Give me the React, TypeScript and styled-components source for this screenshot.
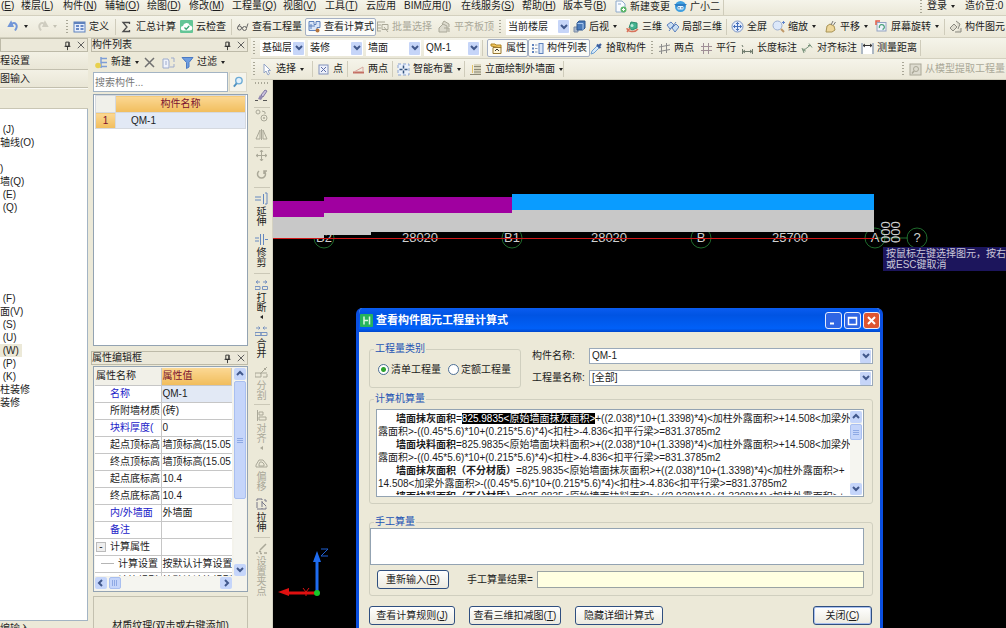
import React from "react";
import styled, { createGlobalStyle, css } from "styled-components";

const Global = createGlobalStyle`
  *, *::before, *::after { box-sizing: border-box; }
  body {
    margin: 0;
    background: #ece9d8;
    color: #1c1c1c;
    font: 10px/12px "Liberation Sans", "Noto Sans CJK SC", sans-serif;
  }
  button, input, select, textarea { font: inherit; color: inherit; margin: 0; }
  ul { list-style: none; margin: 0; padding: 0; }
`;

/* ---------- icons ---------- */

const B = "#5f82bd";
const G = "#aaa898";

const glyphs: Record<string, React.ReactNode> = {
  undo: <path d="M2 6 L4 2.500 L5.500 6 Z M3.500 4.500 C8 1 12 5 8 10.500" fill="none" stroke="#7296d8" strokeWidth="2" />,
  redo: <path d="M11 6 L9 2.500 L7.500 6 Z M9.500 4.500 C5 1 1 5 5 10.500" fill="none" stroke="#cfcdc0" strokeWidth="2" />,
  define: (
    <>
      <rect x="1" y="2" width="11" height="10" fill="#e6eefc" stroke={B} />
      <path d="M1 3h11" stroke={B} strokeWidth="2" />
      <path d="M3 6h3M3 9h3M7.500 6h3M7.500 9h3" stroke="#3f68b4" strokeWidth="1.500" />
    </>
  ),
  sigma: <path d="M9.500 4V2.500H3L7 7L3 11.500H9.500V10" fill="none" stroke="#4a4a4a" strokeWidth="1.300" />,
  cloud: (
    <>
      <rect x="0" y="0" width="13" height="13" rx="1" fill="#63c596" />
      <path d="M3 10.500a2.200 2.200 0 0 1 0-4.400a3.500 3.500 0 0 1 6.800-.6a2.500 2.500 0 0 1 0 5z" fill="#fff" />
      <path d="M4.500 7.500l1.700 1.700l3-3.200" fill="none" stroke="#3aa873" strokeWidth="1.300" />
    </>
  ),
  glasses: (
    <>
      <circle cx="3.500" cy="8" r="2" fill="none" stroke="#666" />
      <circle cx="8.500" cy="8.500" r="2" fill="none" stroke="#666" />
      <path d="M5.500 8l1-1M10.500 8L12 3.500M2 6.500L4 4" fill="none" stroke="#666" />
    </>
  ),
  formula: (
    <>
      <path d="M1 1.500h5v3h2v-3h4v6h-3v3H1z" fill="#dbe7f8" stroke={B} />
      <path d="M3 4v5M1 6h6" stroke={B} />
      <circle cx="9.500" cy="10.500" r="2" fill="#b6753c" />
    </>
  ),
  batch: (
    <>
      <path d="M1 2h8M1 5h4M1 8h4M1 11h4M1.500 2v9" stroke={G} />
      <path d="M6 4.500h6v5H6zM8 7l4 5" fill="none" stroke={G} />
    </>
  ),
  align: <path d="M1 12V8l4-4 4 2v6zM4 4l2-3 5 3v3M6 8h5v4" fill="#dcdacd" stroke={G} />,
  cube: (
    <>
      <path d="M1 7h4v5H1z" fill="#a9b8cc" stroke="#7a8ba4" />
      <path d="M4 3l2-2h6v7l-2 2H4z" fill="#4a7ab8" stroke="#2c5690" />
      <path d="M4.500 3.500H10V10" fill="none" stroke="#a9c7ee" />
    </>
  ),
  orbit: (
    <>
      <path d="M5 2l6 1v5l-5 2-3-2z" fill="#44b38f" stroke="#2d8b6d" />
      <path d="M1 8c0 4 8 5 11 1M1 12l3-4" fill="none" stroke="#d8735b" strokeWidth="1.400" />
      <circle cx="6" cy="5.500" r="1.500" fill="#bdeedd" />
    </>
  ),
  part3d: (
    <>
      <path d="M1 5l4-3 3 3-4 4zM6 8l4-4 3 3-4 5z" fill="#c8def2" stroke={B} />
      <path d="M3 11l7-9" stroke={B} />
    </>
  ),
  full: (
    <>
      <circle cx="6.500" cy="6.500" r="5.500" fill="#e3ecfb" stroke="#7e96c4" />
      <path d="M6.500 2.500v8M2.500 6.500h8M5 4l1.500-1.500L8 4M5 9l1.500 1.500L8 9M4 5L2.500 6.500L4 8M9 5l1.500 1.500L9 8" fill="none" stroke="#456fba" />
    </>
  ),
  zoom: (
    <>
      <circle cx="5.500" cy="5.500" r="4.500" fill="#dce8fa" stroke="#9caed0" />
      <path d="M9 9l3 3" stroke="#c09968" strokeWidth="2" />
      <path d="M10 2.500h3M11.500 1v3" stroke="#5d82cc" />
    </>
  ),
  pan: (
    <>
      <path d="M2 12L3 6l3-2 4 2 1 4-3 2z" fill="#eed79b" stroke="#a89355" />
      <path d="M7 5L9 1M9.500 5l2-3" stroke="#777" />
    </>
  ),
  rotate: (
    <>
      <rect x="2" y="2.500" width="9" height="8.500" fill="#eef3fb" stroke="#93a3c2" />
      <path d="M1 5V1h4" fill="none" stroke="#e15c4a" strokeWidth="1.500" />
      <path d="M4.500 8a2.500 2.500 0 1 1 3 1.500" fill="none" stroke="#4da37c" strokeWidth="1.300" />
    </>
  ),
  element: <path d="M1 8l4-4 3 3-4 4zM7 1l4 3-2 5M6 12h6V8" fill="#dedccf" stroke="#8b8a80" />,
  property: (
    <>
      <path d="M1 4V2h4l1 1h5v3z" fill="#f1c65c" stroke="#b08626" />
      <path d="M3 5.500h8v6H3z" fill="#fff6d9" stroke="#9a7a33" />
      <path d="M5 9l2-2 2 2" fill="none" stroke="#333" />
    </>
  ),
  list: (
    <>
      <path d="M1 3h2M1 6.500h2M1 10h2" stroke={B} strokeWidth="2" />
      <path d="M4 3h2.500M4 6.500h2.500M4 10h2.500" stroke="#8c9cb8" />
      <rect x="8" y="1.500" width="4" height="10" fill="#dbe7f8" stroke={B} />
    </>
  ),
  picker: (
    <>
      <path d="M1 12l1-3 5-5 2 2-5 5z" fill="#d5e9fb" stroke="#6fa0d0" />
      <path d="M7 2.500L10.500 6M8.500 4.500L11 2" stroke="#3c5f9e" strokeWidth="2.200" />
    </>
  ),
  twoAxis: <path d="M3.500 2v10M8.500 1v10M1 9.500L12 7.500M1 5L12 3" fill="none" stroke="#8c8c8c" />,
  parallel: <path d="M3.500 1v11M8.500 1v11M1 4.500h11M1 8.500h11" fill="none" stroke="#a08f96" />,
  length: <path d="M1.500 7v5M11.500 7v5M2 9.500h9M4 8L2 9.500 4 11M9 8l2 1.500L9 11M1 3l1 2" fill="none" stroke="#6f7a6c" />,
  alignDim: <path d="M1 6l2 5M8 1.500l3 4M2.500 8.500L9 3.500M3 6.500l-.5 2 2.300.5M7 3.500h2" fill="none" stroke="#77927a" />,
  measure: (
    <>
      <rect x="2" y="4" width="9" height="8" fill="#fff" />
      <path d="M1 1v11M12 1v11" stroke="#6d83a8" />
      <path d="M2 3.500h9M4 2L2 3.500 4 5M9 2l2 1.500L9 5" stroke="#333" fill="none" />
    </>
  ),
  cursor: <path d="M4 1v9l2-2 2 4 1.500-1L8 7.500h2.500z" fill="#fff" stroke="#93a4c6" />,
  point: (
    <>
      <rect x="2" y="2" width="9" height="9" fill="#eef1fb" stroke="#8292bb" />
      <path d="M4 4l5 5M9 4L4 9" stroke="#5e6ea6" />
    </>
  ),
  line: (
    <>
      <path d="M1 9.500h11" stroke="#c46f62" strokeWidth="2" />
      <path d="M2 9L11 4v5" fill="none" stroke="#d9a79f" />
    </>
  ),
  smart: (
    <>
      <rect x="1" y="1" width="11" height="11" fill="#eaf1fc" stroke="#8ba3cf" strokeDasharray="3 2" />
      <path d="M6.500 2.500v8M2.500 6.500h8" stroke="#35557e" strokeWidth="1.500" strokeDasharray="3 2" />
    </>
  ),
  facade: (
    <>
      <path d="M5 1h7v11H5z" fill="#d8d4bd" />
      <path d="M1 11.500h11M5 3.500h7M5 6.500h7M5 9h7" stroke="#8f8c78" />
      <path d="M3.500 2v8" stroke="#e5c36a" />
    </>
  ),
  extract: (
    <>
      <rect x="1" y="1" width="11" height="11" fill="#dddbcf" stroke={G} />
      <circle cx="7" cy="6" r="2.500" fill="none" stroke={G} />
      <path d="M5 8l-2 2.500" stroke={G} strokeWidth="1.500" />
    </>
  ),
  docPlus: (
    <>
      <path d="M2 1h6l3 3v8H2z" fill="#f8fbff" stroke="#8eaacb" />
      <path d="M4 4h3" stroke="#8eaacb" />
      <circle cx="9.500" cy="9.500" r="3" fill="#5cb56a" />
      <path d="M8 9.500h3M9.500 8v3" stroke="#fff" />
    </>
  ),
  mascot: (
    <>
      <circle cx="6.500" cy="6.500" r="5.500" fill="#3f9fe0" />
      <path d="M0 4h13L10 7H3z" fill="#2b7dc4" />
      <rect x="3.500" y="6" width="6" height="3.500" rx="1" fill="#eaf6ff" />
      <path d="M5 7v1.500M8 7v1.500" stroke="#24588c" />
    </>
  ),
  newItem: (
    <>
      <path d="M6 1v11M6 2.500h6M6 6.500h6M6 10.500h6" stroke="#7d9ed6" strokeWidth="1.500" />
      <circle cx="3" cy="9.500" r="2.800" fill="#e8d14e" />
    </>
  ),
  remove: <path d="M2 2l9 9M11 2l-9 9" stroke="#707070" strokeWidth="1.500" />,
  copy: (
    <>
      <path d="M1 3h5l1 2v7H1z" fill="#eef2fb" stroke="#9dabcc" />
      <path d="M3 6h2M3 8h2M9 2h3v4M12 8v3H8" fill="none" stroke="#9dabcc" />
    </>
  ),
  filter: <path d="M1 1.500h11L8 6.500V11L5.500 12.500V6.500z" fill="#6f9ee0" stroke="#4b7ac4" />,
  search: (
    <>
      <circle cx="7.500" cy="5" r="3.500" fill="#e2f1fb" stroke="#6cabd6" strokeWidth="1.500" />
      <path d="M5 8l-3 3.500" stroke="#4d90c0" strokeWidth="2" />
    </>
  ),
  pin: <path d="M4.500 2.500h4v5h-4zM3 7.500h7M6.500 8v4M8 3v4" fill="none" stroke="#222" />,
  close: <path d="M3 3l7 7M10 3l-7 7" stroke="#555" />,
  brush: (
    <>
      <path d="M6 6l4-5 2 1-4 6z" fill="#c9c0dd" stroke="#8079a3" />
      <path d="M3 10l2-4 3 2-2 3z" fill="#9188b0" />
      <path d="M0 11.500h3M8 11.500h4" stroke="#555" />
    </>
  ),
  duplicate: (
    <g fill="none" stroke={G}>
      <circle cx="3" cy="3" r="2" />
      <circle cx="9" cy="9" r="3" />
      <path d="M7 2l3 1v2M8 9h2M9 8v2" />
    </g>
  ),
  mirror: <path d="M5 2v9H1zM8 2v9h4zM6.500 1v11" fill="none" stroke={G} />,
  move: <path d="M6.500 1v11M1 6.500h11M5 3l1.500-2L8 3M5 10l1.500 2L8 10M3 5L1 6.500 3 8M10 5l2 1.500L10 8" fill="none" stroke={G} />,
  turn: <path d="M4 3a4 4 0 1 0 5 0M9 6V3h3" fill="none" stroke={G} strokeWidth="1.500" />,
  extend: <path d="M0 5h6M0 8h6M8.500 2v10M10 1h2v11h-2" fill="none" stroke="#6488c0" />,
  trim: <path d="M0 5h4M0 8h4M5.500 1v11M8.500 1v11M10 6.500h3" fill="none" stroke="#6488c0" />,
  split: <path d="M0 8.500h5v3H0zM7.500 8.500h5v3h-5zM1 4h4M3 2.500L1 4l2 1.500M8 4h4M10 2.500L12 4l-2 1.500" fill="none" stroke="#7893c0" />,
  join: <path d="M0 8.500h6v3H0zM6 8.500h6v3H6zM1 4h4M3.500 2.500L5 4 3.500 5.500M8 4h4M9.500 2.500L8 4l1.500 1.500" fill="none" stroke="#7893c0" />,
  cut: <path d="M0 7h6v4H0zM6 7h6M5 8l7-7M9 2l2 2M8 11h4V8" fill="none" stroke={G} />,
  alignV: <path d="M2.500 1v11M4 3h4v3H4zM4 8h7v3H4z" fill="none" stroke={G} />,
  offset: <path d="M1 10V8l3-5h4l4 5v2zM4 9V7l1-2h2l2 2v2z" fill="none" stroke={G} />,
  stretch: <path d="M2 1h5v10H2zM7 4l4 4v3H7M9 2l2 0v2" fill="none" stroke="#778" strokeDasharray="6 1" />,
  grip: <path d="M5 8l6-6M4 9l2 1M1 11h2M5 11.500h2M9 11h3" fill="none" stroke={G} strokeWidth="1.500" />,
};

const Svg = styled.svg`
  flex: none;
  display: block;
`;
const Icon = ({ name, size = 13 }: { name: string; size?: number }) => (
  <Svg width={size} height={size} viewBox="0 0 13 13" aria-hidden="true">
    {glyphs[name]}
  </Svg>
);

const Chevron = ({ dir = "down" }: { dir?: "down" | "up" | "left" | "right" }) => {
  const d = { down: "M2 3l3 3 3-3", up: "M2 6l3-3 3 3", left: "M6 2L3 5l3 3", right: "M4 2l3 3-3 3" }[dir];
  return (
    <Svg width="10" height="10" viewBox="0 0 10 10" aria-hidden="true">
      <path d={d} fill="none" stroke="#41588c" strokeWidth="2" />
    </Svg>
  );
};

/* ---------- shared bars ---------- */

const Page = styled.div`
  height: 100vh;
  display: flex;
  flex-direction: column;
  overflow: hidden;
  white-space: nowrap;
`;

const Row = styled.div<{ $h: number }>`
  flex: none;
  display: flex;
  align-items: center;
  height: ${(p) => p.$h}px;
  overflow: hidden;
  background: linear-gradient(#f5f4ea, #ebe8d8);
  border-bottom: 1px solid #d3d0bf;
`;

const MenuBar = styled(Row)`
  align-items: flex-start;
`;

const Item = styled.button<{ $w: number; $muted?: boolean }>`
  flex: none;
  display: flex;
  align-items: center;
  gap: 3px;
  width: ${(p) => p.$w}px;
  padding: 0;
  border: 0;
  background: none;
  line-height: 12px;
  text-align: left;
  white-space: nowrap;
  color: ${(p) => (p.$muted ? "#aaa898" : "#1c1c1c")};
`;

const Pressed = styled(Item)`
  height: 18px;
  padding: 0 2px;
  border: 1px solid #a5b0c4;
  border-radius: 2px;
  background: #fbfbf8;
`;

const Spacer = styled.span<{ $w?: number }>`
  flex: ${(p) => (p.$w ? "none" : "1")};
  width: ${(p) => p.$w ?? 0}px;
`;

const Divider = styled.span`
  flex: none;
  width: 1px;
  height: 16px;
  margin: 0 4px 0 0;
  background: #cfccbb;
`;

const Grip = styled.span`
  flex: none;
  width: 2px;
  height: 14px;
  margin-right: 5px;
  background: repeating-linear-gradient(#a9a797 0 1px, transparent 1px 3px);
`;

const Caret = styled.span<{ $muted?: boolean }>`
  flex: none;
  width: 0;
  height: 0;
  margin-left: 1px;
  border: 2px solid transparent;
  border-top: 3px solid ${(p) => (p.$muted ? "#c4c2b4" : "#222")};
  border-bottom: 0;
`;

const ComboBox = styled.span<{ $w?: number; $framed?: boolean }>`
  flex: ${(p) => (p.$w ? "none" : "1")};
  width: ${(p) => (p.$w ? p.$w + "px" : "auto")};
  height: 16px;
  display: flex;
  align-items: center;
  background: #fff;
  padding-right: 1px;
  border: ${(p) => (p.$framed ? "1px solid #9aa9b9" : "0")};
  select {
    flex: 1;
    min-width: 0;
    height: 14px;
    padding: 0 2px;
    border: 0;
    background: none;
    appearance: none;
    line-height: 14px;
  }
`;
const ArrowFace = styled.span`
  flex: none;
  display: grid;
  place-items: center;
  width: 11px;
  height: 13px;
  background: #c6d5f8;
  border-radius: 1px;
  pointer-events: none;
`;
const Combo = ({ id, label, value, w, framed }: { id?: string; label?: string; value: string; w?: number; framed?: boolean }) => (
  <ComboBox $w={w} $framed={framed}>
    <select id={id} aria-label={label} defaultValue={value}>
      <option>{value}</option>
    </select>
    <ArrowFace>
      <Chevron />
    </ArrowFace>
  </ComboBox>
);

type Tool = { t?: string; i?: string; w: number; caret?: boolean; muted?: boolean; on?: boolean; name?: string };
const Tools = ({ items }: { items: (Tool | "|" | "grip")[] }) => (
  <>
    {items.map((it, k) => {
      if (it === "|") return <Divider key={k} />;
      if (it === "grip") return <Grip key={k} />;
      const Part = it.on ? Pressed : Item;
      return (
        <Part key={k} type="button" $w={it.w} $muted={it.muted} aria-label={it.name}>
          {it.i && <Icon name={it.i} />}
          {it.t}
          {it.caret && <Caret $muted={it.muted} />}
        </Part>
      );
    })}
  </>
);

const Key = ({ text }: { text: string }) => {
  const m = text.match(/^(.*)\((\w)\)$/);
  return m ? (
    <span>
      {m[1]}(<u>{m[2]}</u>)
    </span>
  ) : (
    <span>{text}</span>
  );
};

const menus: [string, number][] = [
  ["(E)", 20], ["楼层(L)", 42], ["构件(N)", 42], ["辅轴(O)", 42], ["绘图(D)", 42], ["修改(M)", 43],
  ["工程量(Q)", 51], ["视图(V)", 42], ["工具(T)", 41], ["云应用", 38], ["BIM应用(I)", 57],
  ["在线服务(S)", 61], ["帮助(H)", 41], ["版本号(B)", 51],
];

/* ---------- docked panels ---------- */

const Workspace = styled.div`
  flex: 1;
  min-height: 0;
  display: flex;
  gap: 3px;
`;

const Dock = styled.section<{ $w: number }>`
  flex: none;
  width: ${(p) => p.$w}px;
  display: flex;
  flex-direction: column;
  min-height: 0;
`;

const PanelTitle = styled.header`
  flex: none;
  display: flex;
  align-items: center;
  gap: 2px;
  height: 14px;
  border: 1px solid #bdbaa8;
  background: #ebe8d9;
  font-size: 10px;
  h2 { flex: 1; margin: 0; font: inherit; }
`;
const TitleButton = styled.button`
  display: grid;
  place-items: center;
  width: 12px;
  height: 12px;
  padding: 0;
  border: 0;
  background: none;
`;
const Title = ({ text }: { text: string }) => (
  <PanelTitle>
    <h2>{text}</h2>
    <TitleButton aria-label="固定"><Icon name="pin" size={11} /></TitleButton>
    <TitleButton aria-label="关闭面板"><Icon name="close" size={12} /></TitleButton>
  </PanelTitle>
);

const NavButton = styled.button`
  flex: none;
  height: 18px;
  padding: 0;
  border: 0;
  border-bottom: 1px solid #c2bfae;
  background: linear-gradient(#f3f1e5, #e9e6d6);
  text-align: left;
`;
const NavHead = styled.div`
  flex: none;
  height: 21px;
  border-top: 1px solid #faf9f2;
  border-bottom: 1px solid #c9c6b4;
`;
const Tree = styled.ul`
  && { padding-top: 14px; }
  flex: 1;
  overflow: hidden;
  background: #fff;
  border: solid #a3b4c4;
  border-width: 0 1px 1px 0;
`;
const TreeRow = styled.li<{ $on?: boolean }>`
  width: max-content;
  height: 13px;
  line-height: 13px;
  padding: 0 3px 0 0;
  background: ${(p) => (p.$on ? "#ece9d8" : "none")};
`;
const Below = styled.div`
  flex: none;
  height: 7px;
  padding-top: 2px;
  overflow: hidden;
`;

const treeRows = [" (J)", "轴线(O)", "", ")", "墙(Q)", " (E)", " (Q)", "", "", "", "", "", "", " (F)", "面(V)", " (S)", " (U)", " (W)", " (P)", " (K)", "柱装修", "装修"];
const TreeText = styled.span`
  white-space: pre;
`;

const PanelTools = styled.div`
  flex: none;
  display: flex;
  align-items: center;
  height: 20px;
  padding-left: 4px;
`;
const SearchRow = styled.div`
  flex: none;
  display: flex;
  gap: 1px;
  height: 21px;
  padding: 0 1px 0 2px;
  input {
    flex: 1;
    min-width: 0;
    height: 20px;
    padding: 0 1px;
    border: 1px solid #a3b4c4;
    background: #fff;
  }
  input::placeholder { color: #777; }
  button {
    width: 18px;
    height: 20px;
    padding: 2px;
    border: 1px solid #dcd9ca;
    background: #f5f4ec;
  }
`;
const ListBox = styled.div`
  flex: 1;
  margin: 1px 0 5px 2px;
  padding: 0 1px;
  background: #fff;
  border: 1px solid #93a3b2;
  overflow: hidden;
`;
const orange = css`
  background: linear-gradient(#fbd894, #f1bd5c);
  color: #7a1230;
`;
const ListTable = styled.table`
  width: 100%;
  border-collapse: collapse;
  table-layout: fixed;
  col:first-child { width: 20px; }
  th, td { padding: 0; height: 16px; font-weight: 400; border: 1px solid #d5d9df; }
  thead th { height: 17px; }
  thead th:last-child, tbody th { ${orange} }
  thead th:first-child { background: #f0f0ea; }
  td { background: #e2e9f5; padding-left: 15px; }
`;

const PropBox = styled.div`
  flex: none;
  height: 226px;
  margin: 1px 0 3px 2px;
  padding: 1px;
  display: grid;
  grid-template-columns: 1fr 12px;
  grid-template-rows: 1fr 13px;
  gap: 1px 2px;
  border: 1px solid #93a3b2;
  background: #f4f3ec;
`;
const PropClip = styled.div`
  overflow: hidden;
  background: #fff;
`;
const PropTable = styled.table`
  width: 100%;
  border-collapse: collapse;
  table-layout: fixed;
  col:first-child { width: 66px; }
  th, td {
    height: 17px;
    padding: 0 0 0 1px;
    overflow: hidden;
    text-align: left;
    font-weight: 400;
    line-height: 12px;
    border: 1px solid #c6c6c6;
    border-width: 0 1px 1px 0;
  }
  td { border-right: 0; }
  thead th { background: #f1f0e8; height: 17px; }
  thead th:last-child { ${orange} }
`;
const PropName = styled.th<{ $blue?: boolean; $indent: number }>`
  && { padding-left: ${(p) => p.$indent}px; }
  color: ${(p) => (p.$blue ? "#2222c8" : "inherit")};
`;
const PropValue = styled.td<{ $on?: boolean }>`
  background: ${(p) => (p.$on ? "#e2e9f5" : "#fff")};
`;
const Toggle = styled.button`
  display: inline-grid;
  place-items: center;
  width: 10px;
  height: 10px;
  margin-right: 4px;
  padding: 0;
  border: 1px solid #bbb;
  background: #eee;
  line-height: 8px;
  vertical-align: middle;
`;
const Branch = styled.span`
  display: inline-block;
  width: 13px;
  height: 1px;
  margin-right: 4px;
  background: #b5b5b5;
  vertical-align: middle;
`;

const props: [string, string, boolean, number][] = [
  ["名称", "QM-1", true, 15], ["所附墙材质", "(砖)", false, 15], ["块料厚度(", "0", true, 15],
  ["起点顶标高", "墙顶标高(15.05", false, 15], ["终点顶标高", "墙顶标高(15.05", false, 15],
  ["起点底标高", "10.4", false, 15], ["终点底标高", "10.4", false, 15], ["内/外墙面", "外墙面", true, 15],
  ["备注", "", true, 15], ["计算属性", "", false, 1], ["计算设置", "按默认计算设置", false, 6],
  ["计算规则", "按默认计算规则", false, 6],
];

const Bar = styled.div<{ $row?: boolean }>`
  display: flex;
  flex-direction: ${(p) => (p.$row ? "row" : "column")};
  justify-content: space-between;
  background: #f5f5f0;
`;
const BarButton = styled.button`
  flex: none;
  display: grid;
  place-items: center;
  width: 12px;
  height: 12px;
  padding: 0;
  border: 0;
  border-radius: 2px;
  background: #c5d5fa;
`;
const Thumb = styled.span<{ $w: number; $h: number; $row?: boolean }>`
  flex: none;
  display: grid;
  place-items: center;
  width: ${(p) => p.$w}px;
  height: ${(p) => p.$h}px;
  margin: ${(p) => (p.$row ? "0 auto 0 2px" : "1px 0 auto")};
  border: 1px solid #a9bff0;
  border-radius: 2px;
  background: #c5d5fa;
  &::after {
    content: "";
    width: 6px;
    height: 6px;
    background: repeating-linear-gradient(${(p) => (p.$row ? "90deg" : "0deg")}, #8ea9e4 0 1px, transparent 1px 2px);
  }
`;

const Texture = styled.div`
  flex: none;
  height: 32px;
  margin: 1px 0 0 2px;
  padding-top: 23px;
  border: 1px solid #c3c0af;
  border-bottom: 0;
  overflow: hidden;
  text-align: center;
`;

/* ---------- drawing area ---------- */

const Right = styled.div`
  flex: 1;
  min-width: 0;
  display: flex;
  flex-direction: column;
`;
const Stage = styled.div`
  flex: 1;
  min-height: 0;
  display: flex;
`;
const SideBar = styled.nav`
  flex: none;
  width: 22px;
  display: flex;
  flex-direction: column;
  align-items: center;
  padding-top: 2px;
  border-right: 1px solid #d5d2c2;
  overflow: hidden;
`;
const SideGrip = styled.span`
  width: 14px;
  height: 2px;
  margin-bottom: 4px;
  background: repeating-linear-gradient(90deg, #a9a797 0 1px, transparent 1px 3px);
`;
const SideItem = styled.button<{ $h: number; $muted?: boolean; $line?: boolean; $labelled?: boolean }>`
  flex: none;
  width: 16px;
  height: ${(p) => p.$h}px;
  display: flex;
  flex-direction: column;
  align-items: center;
  padding: ${(p) => (p.$labelled ? 4 : 1)}px 0 0;
  border: 0;
  border-bottom: 1px solid ${(p) => (p.$line ? "#cbc8b7" : "transparent")};
  background: none;
  color: ${(p) => (p.$muted ? "#aaa898" : "#1c1c1c")};
  span {
    width: 10px;
    margin-top: 2px;
    line-height: 10px;
    white-space: normal;
    word-break: break-all;
  }
`;
const SideCaret = styled.i<{ $muted?: boolean }>`
  margin-top: 2px;
  border: 2px solid transparent;
  border-right: 3px solid ${(p) => (p.$muted ? "#aaa898" : "#222")};
  border-left: 0;
`;

const sideTools: { i: string; t?: string; h: number; muted?: boolean; line?: boolean; caret?: boolean }[] = [
  { i: "brush", h: 20, line: true },
  { i: "duplicate", h: 19, muted: true },
  { i: "mirror", h: 21, muted: true, line: true },
  { i: "move", h: 19, muted: true },
  { i: "turn", h: 21, muted: true, line: true },
  { i: "extend", t: "延伸", h: 41 },
  { i: "trim", t: "修剪", h: 45, line: true },
  { i: "split", t: "打断", h: 46, caret: true },
  { i: "join", t: "合并", h: 42 },
  { i: "cut", t: "分割", h: 43, muted: true, line: true },
  { i: "alignV", t: "对齐", h: 48, muted: true, caret: true },
  { i: "offset", t: "偏移", h: 41, muted: true },
  { i: "stretch", t: "拉伸", h: 44, line: true },
  { i: "grip", t: "设置夹点", h: 62, muted: true },
];

const Canvas = styled.main`
  flex: 1;
  min-width: 0;
  position: relative;
  overflow: hidden;
  background: #000;
`;
const Drawing = styled.svg`
  display: block;
  width: 100%;
  height: 100%;
  font: 13px "Liberation Sans", sans-serif;
`;
const Hint = styled.div`
  position: absolute;
  left: 610px;
  top: 167px;
  right: 0;
  height: 24px;
  padding: 1px 3px;
  overflow: hidden;
  background: #1c155c;
  color: #c9c6d8;
  line-height: 11px;
`;

/* ---------- dialog ---------- */

const Dialog = styled.section`
  position: absolute;
  left: 83px;
  top: 228px;
  width: 527px;
  border: solid #0a4fe0;
  border-width: 0 3px 3px;
  border-radius: 6px 6px 0 0;
  background: #ece9d8;
  overflow: hidden;
`;
const DialogTitle = styled.header`
  display: flex;
  align-items: center;
  gap: 2px;
  height: 24px;
  padding: 0 0 0 1px;
  background: linear-gradient(#0a5cf0, #0054e3 30%, #0060f8 85%, #0047cc);
  color: #fff;
  h1 { flex: 1; margin: 0 0 0 1px; font-size: 11px; line-height: 14px; font-weight: 700; }
`;
const Cap = styled.button<{ $red?: boolean }>`
  display: grid;
  place-items: center;
  width: 17px;
  height: 17px;
  padding: 0;
  border: 1px solid #e6edfb;
  border-radius: 3px;
  background: ${(p) => (p.$red ? "#dd5530" : "#2f66e4")};
`;
const DialogBody = styled.div`
  display: flex;
  flex-direction: column;
  padding: 11px 7px 12px 10px;
`;
const TopRow = styled.div`
  display: grid;
  grid-template-columns: 152px 1fr;
  gap: 11px;
  margin-bottom: 5px;
`;
const Group = styled.fieldset`
  min-width: 0;
  margin: 0;
  padding: 0 8px 6px 6px;
  border: 1px solid #d0cfbf;
  border-radius: 3px;
  legend { margin-left: -2px; padding: 0 1px; color: #2454b4; line-height: 12px; }
`;
const Radios = styled.div`
  display: flex;
  align-items: center;
  gap: 7px;
  height: 24px;
  padding: 5px 0 0 2px;
  margin-bottom: 2px;
  label { display: flex; align-items: center; gap: 2px; }
  input {
    appearance: none;
    width: 11px;
    height: 11px;
    border: 1px solid #4c6f96;
    border-radius: 50%;
    background: #fff;
  }
  input:checked { background: radial-gradient(circle, #2fa32f 0 2px, #fff 3px); }
`;
const Fields = styled.div`
  display: grid;
  grid-template-columns: 57px 1fr;
  grid-auto-rows: 16px;
  row-gap: 6px;
  align-content: start;
  align-items: center;
  padding-top: 5px;
`;
const Formula = styled.div`
  display: grid;
  grid-template-columns: 1fr 12px;
  height: 88px;
  margin-top: 4px;
  padding: 1px;
  border: 1px solid #93a3b2;
  background: #fff;
`;
const Lines = styled.div`
  overflow: hidden;
  padding: 1px 0 0;
  line-height: 13px;
  p { margin: 0; white-space: pre; }
  p.start { padding-left: 18px; }
  mark { background: #000; color: #fff; }
`;
const Manual = styled(Group)`
  margin-top: 12px;
  padding-left: 0;
  legend { margin-left: 4px; }
  textarea {
    display: block;
    width: 100%;
    height: 37px;
    border: 1px solid #93a3b2;
    background: #fff;
    resize: none;
  }
`;
const ManualRow = styled.div`
  display: flex;
  align-items: center;
  margin-top: 5px;
  padding-left: 7px;
  label { margin-left: 18px; width: 70px; }
  input {
    flex: 1;
    height: 17px;
    border: 1px solid #9aa3a3;
    background: #ffffe1;
  }
`;
const Push = styled.button<{ $w: number; $main?: boolean }>`
  width: ${(p) => p.$w}px;
  height: 19px;
  padding: 0;
  border: 1px solid #2f4f80;
  border-radius: 3px;
  background: linear-gradient(#fff, #eceae0);
  box-shadow: ${(p) => (p.$main ? "inset 0 0 0 1px #a9c0ee" : "none")};
  white-space: nowrap;
`;
const Actions = styled.footer`
  display: flex;
  gap: 14px;
  margin-top: 10px;
  padding-right: 1px;
  button:last-child { margin-left: auto; }
`;

const bubbles: [number, string][] = [[51, "B2"], [239, "B1"], [428, "B"], [602, "A"], [644, "?"]];

const tail = "+((2.038)*10+(1.3398)*4)<加柱外露面积>+14.508<加梁外";
const rest = "露面积>-((0.45*5.6)*10+(0.215*5.6)*4)<扣柱>-4.836<扣平行梁>=831.3785m2";

export default function App() {
  return (
    <>
      <Global />
      <Page>
        <MenuBar as="nav" $h={16}>
          <Spacer $w={1} />
          {menus.map(([t, w]) => (
            <Item key={t} type="button" $w={w}>
              <Key text={t} />
            </Item>
          ))}
          <Tools items={[{ i: "docPlus", t: "新建变更", w: 60 }, { i: "mascot", t: "广小二", w: 49 }]} />
          <Divider />
          <Spacer />
          <Grip />
          <Tools items={[{ t: "登录", w: 38, caret: true }, { t: "造价豆:0", w: 41 }]} />
        </MenuBar>

        <Row $h={22}>
          <Spacer $w={7} />
          <Tools
            items={[
              { i: "undo", w: 29, caret: true, name: "撤销" }, { i: "redo", w: 30, caret: true, muted: true, name: "恢复" },
              "grip", { i: "define", t: "定义", w: 42 },
              "|", { i: "sigma", t: "汇总计算", w: 60 }, { i: "cloud", t: "云检查", w: 51 },
              "|", { i: "glasses", t: "查看工程量", w: 69 }, { i: "formula", t: "查看计算式", w: 71, on: true },
              { i: "batch", t: "批量选择", w: 62, muted: true }, { i: "align", t: "平齐板顶", w: 61, muted: true },
              "grip",
            ]}
          />
          <Combo label="楼层范围" value="当前楼层" w={64} />
          <Spacer $w={3} />
          <Tools
            items={[
              { i: "cube", t: "后视", w: 53, caret: true }, { i: "orbit", t: "三维", w: 40 }, { i: "part3d", t: "局部三维", w: 60 },
              "|", { i: "full", t: "全屏", w: 41 }, { i: "zoom", t: "缩放", w: 52, caret: true }, { i: "pan", t: "平移", w: 51, caret: true },
              { i: "rotate", t: "屏幕旋转", w: 69, caret: true }, "|", { i: "element", t: "构件图元", w: 60 },
            ]}
          />
        </Row>

        <Workspace>
          <Dock $w={88}>
            <Title text="" />
            <NavButton>程设置</NavButton>
            <NavButton>图输入</NavButton>
            <NavHead />
            <Tree>
              {treeRows.map((t, k) => (
                <TreeRow key={k} $on={t.includes("W")}>
                  <TreeText>{t}</TreeText>
                </TreeRow>
              ))}
            </Tree>
            <Below>编输入</Below>
          </Dock>

          <Dock $w={157}>
            <Title text="构件列表" />
            <PanelTools>
              <Tools
                items={[
                  { i: "newItem", t: "新建", w: 48, caret: true }, { i: "remove", w: 19, name: "删除" },
                  { i: "copy", w: 19, name: "复制" }, { i: "filter", t: "过滤", w: 44, caret: true },
                ]}
              />
            </PanelTools>
            <SearchRow>
              <input aria-label="搜索构件" placeholder="搜索构件..." />
              <button aria-label="搜索"><Icon name="search" size={12} /></button>
            </SearchRow>
            <ListBox>
              <ListTable>
                <colgroup><col /><col /></colgroup>
                <thead><tr><th /><th>构件名称</th></tr></thead>
                <tbody><tr><th>1</th><td>QM-1</td></tr></tbody>
              </ListTable>
            </ListBox>
            <Title text="属性编辑框" />
            <PropBox>
              <PropClip>
                <PropTable>
                  <colgroup><col /><col /></colgroup>
                  <thead><tr><th>属性名称</th><th>属性值</th></tr></thead>
                  <tbody>
                    {props.map(([n, v, blue, indent]) => (
                      <tr key={n}>
                        <PropName $blue={blue} $indent={indent}>
                          {indent === 1 && <Toggle aria-label="折叠">-</Toggle>}
                          {indent === 6 && <Branch />}
                          {n}
                        </PropName>
                        <PropValue $on={n === "名称"}>{v}</PropValue>
                      </tr>
                    ))}
                  </tbody>
                </PropTable>
              </PropClip>
              <Bar>
                <BarButton aria-label="向上"><Chevron dir="up" /></BarButton>
                <Thumb $w={12} $h={118} />
                <BarButton aria-label="向下"><Chevron /></BarButton>
              </Bar>
              <Bar $row>
                <BarButton aria-label="向左"><Chevron dir="left" /></BarButton>
                <Thumb $w={12} $h={12} $row />
                <BarButton aria-label="向右"><Chevron dir="right" /></BarButton>
              </Bar>
            </PropBox>
            <Texture>材质纹理(双击或右键添加)</Texture>
          </Dock>

          <Right>
            <Row $h={21}>
              <Spacer $w={2} />
              <Grip />
              <Combo label="楼层" value="基础层" w={45} />
              <Spacer $w={3} />
              <Combo label="类别" value="装修" w={55} />
              <Spacer $w={3} />
              <Combo label="构件类型" value="墙面" w={55} />
              <Spacer $w={3} />
              <Combo label="构件" value="QM-1" w={56} />
              <Spacer $w={2} />
              <Divider />
              <Tools
                items={[
                  { i: "property", t: "属性", w: 41, on: true }, { i: "list", t: "构件列表", w: 62, on: true },
                  { i: "picker", t: "拾取构件", w: 61 }, "grip", { i: "twoAxis", t: "两点", w: 42 },
                  { i: "parallel", t: "平行", w: 41 }, { i: "length", t: "长度标注", w: 60 },
                  { i: "alignDim", t: "对齐标注", w: 60 }, { i: "measure", t: "测量距离", w: 59 }, "|",
                ]}
              />
            </Row>
            <Row $h={21}>
              <Spacer $w={2} />
              <Tools
                items={[
                  "grip", { i: "cursor", t: "选择", w: 52, caret: true }, "|", { i: "point", t: "点", w: 30 },
                  "|", { i: "line", t: "两点", w: 40 }, "|", { i: "smart", t: "智能布置", w: 67, caret: true },
                  "|", { i: "facade", t: "立面绘制外墙面", w: 94, caret: true }, "|",
                ]}
              />
              <Spacer />
              <Grip />
              <Tools items={[{ i: "extract", t: "从模型提取工程量", w: 97, muted: true }]} />
            </Row>
            <Stage>
              <SideBar>
                <SideGrip />
                {sideTools.map((s) => (
                  <SideItem key={s.i} type="button" $h={s.h} $muted={s.muted} $line={s.line} $labelled={!!s.t} aria-label={s.t ?? s.i}>
                    <Icon name={s.i} />
                    {s.t && <span>{s.t}</span>}
                    {s.caret && <SideCaret $muted={s.muted} />}
                  </SideItem>
                ))}
              </SideBar>

              <Canvas>
                <Drawing aria-label="立面图">
                  <g fill="none" stroke="#1f6b2c">
                    {bubbles.map(([x]) => (
                      <circle key={x} cx={x} cy="158" r="10" />
                    ))}
                    <path d="M602 158h33" />
                  </g>
                  <g fill="#d0d0d0" textAnchor="middle">
                    {bubbles.map(([x, t]) => (
                      <text key={t} x={x} y="162">{t}</text>
                    ))}
                    <text x="147" y="162">28020</text>
                    <text x="336" y="162">28020</text>
                    <text x="517" y="162">25700</text>
                  </g>
                  <g fill="#d0d0d0">
                    <text transform="translate(617 163) rotate(-90)">000</text>
                    <text transform="translate(627 163) rotate(-90)">000</text>
                  </g>
                  <path d="M0 136H51V133H239V130H601V152H98V155H51V158H0z" fill="#c8c8c8" />
                  <path d="M0 121H51V117H239V133H51V137H0z" fill="#a000a0" />
                  <path d="M239 114H601V130H239z" fill="#0a9cff" />
                  <path d="M0 158.500H602" stroke="#d01818" />
                  <path d="M44 512V480" stroke="#1f6cf0" strokeWidth="3" />
                  <path d="M44 471l4 11h-8z" fill="#1f6cf0" />
                  <path d="M44 513H14" stroke="#e01010" strokeWidth="3" />
                  <path d="M5 512l11-4v8z" fill="#e01010" />
                  <circle cx="44" cy="513" r="3" fill="#18c828" />
                  <path d="M48 469h7l-7 7h7" fill="none" stroke="#1f5fd0" />
                  <path d="M30 508l3 4 3-4M33 512v4" fill="none" stroke="#e01010" />
                </Drawing>
                <Hint>
                  按鼠标左键选择图元，按右键
                  <br />
                  或ESC键取消
                </Hint>

                <Dialog role="dialog" aria-label="查看构件图元工程量计算式">
                  <DialogTitle>
                    <Svg width="13" height="13" viewBox="0 0 13 13" aria-hidden="true">
                      <rect width="13" height="13" rx="1" fill="#25b45c" />
                      <path d="M4 2.500v8M4 6.500h4M9.500 2.500v8" stroke="#d9f7e2" strokeWidth="1.500" />
                    </Svg>
                    <h1>查看构件图元工程量计算式</h1>
                    <Cap aria-label="最小化">
                      <Svg width="11" height="11"><path d="M2 8.500h4" stroke="#fff" strokeWidth="2" /></Svg>
                    </Cap>
                    <Cap aria-label="最大化">
                      <Svg width="11" height="11"><path d="M1.500 2.500h8v7h-8zM1 3h9" fill="none" stroke="#fff" strokeWidth="1.500" /></Svg>
                    </Cap>
                    <Cap $red aria-label="关闭窗口">
                      <Svg width="11" height="11"><path d="M2 2l7 7M9 2L2 9" stroke="#fff" strokeWidth="2" /></Svg>
                    </Cap>
                  </DialogTitle>
                  <DialogBody>
                    <TopRow>
                      <Group>
                        <legend>工程量类别</legend>
                        <Radios>
                          <label><input type="radio" name="kind" defaultChecked />清单工程量</label>
                          <label><input type="radio" name="kind" />定额工程量</label>
                        </Radios>
                      </Group>
                      <Fields>
                        <label htmlFor="part">构件名称:</label>
                        <Combo id="part" value="QM-1" framed />
                        <label htmlFor="qty">工程量名称:</label>
                        <Combo id="qty" value="[全部]" framed />
                      </Fields>
                    </TopRow>
                    <Group>
                      <legend>计算机算量</legend>
                      <Formula>
                        <Lines>
                          <p className="start"><b>墙面抹灰面积</b>=<mark>825.9835&lt;原始墙面抹灰面积&gt;</mark>{tail}</p>
                          <p>{rest}</p>
                          <p className="start"><b>墙面块料面积</b>=825.9835&lt;原始墙面块料面积&gt;{tail}</p>
                          <p>{rest}</p>
                          <p className="start"><b>墙面抹灰面积（不分材质）</b>=825.9835&lt;原始墙面抹灰面积&gt;+((2.038)*10+(1.3398)*4)&lt;加柱外露面积&gt;+</p>
                          <p>14.508&lt;加梁外{rest}</p>
                          <p className="start"><b>墙面块料面积（不分材质）</b>=825.9835&lt;原始墙面块料面积&gt;+((2.038)*10+(1.3398)*4)&lt;加柱外露面积&gt;+</p>
                        </Lines>
                        <Bar>
                          <BarButton aria-label="向上"><Chevron dir="up" /></BarButton>
                          <Thumb $w={12} $h={16} />
                          <BarButton aria-label="向下"><Chevron /></BarButton>
                        </Bar>
                      </Formula>
                    </Group>
                    <Manual>
                      <legend>手工算量</legend>
                      <textarea aria-label="手工算量" />
                      <ManualRow>
                        <Push type="button" $w={72}><Key text="重新输入(R)" /></Push>
                        <label htmlFor="result">手工算量结果=</label>
                        <input id="result" readOnly />
                      </ManualRow>
                    </Manual>
                    <Actions>
                      <Push type="button" $w={86}><Key text="查看计算规则(J)" /></Push>
                      <Push type="button" $w={92}><Key text="查看三维扣减图(T)" /></Push>
                      <Push type="button" $w={88}>隐藏详细计算式</Push>
                      <Push type="button" $w={59} $main><Key text="关闭(C)" /></Push>
                    </Actions>
                  </DialogBody>
                </Dialog>
              </Canvas>
            </Stage>
          </Right>
        </Workspace>
      </Page>
    </>
  );
}
